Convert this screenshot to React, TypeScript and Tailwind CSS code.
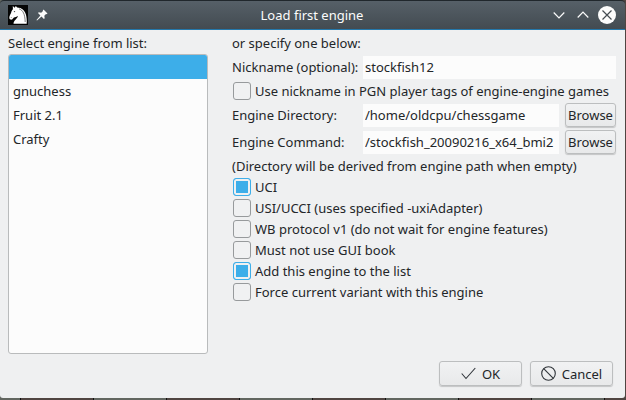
import { useLayoutEffect, useRef, useState } from "react";

const field =
  "h-[23px] min-w-0 flex-1 bg-[#fcfcfc] px-0.5 text-[13px] text-[#232629] outline-none";
const button =
  "flex items-center justify-center rounded-[3px] border border-[#bcbebf] bg-linear-to-b from-[#f1f2f3] to-[#e8e9ea] shadow-[0_1px_1px_#0000002e]";

function Check({ label, checked = false, tall = false }: { label: string; checked?: boolean; tall?: boolean }) {
  return (
    <label className={`flex items-center gap-1 pl-px whitespace-nowrap ${tall ? "h-6" : "mb-px h-5"}`}>
      <input
        type="checkbox"
        defaultChecked={checked}
        className="size-[18px] shrink-0 appearance-none rounded-[3px] border border-[#979a9c] bg-[#f0f1f2] checked:border-[#3daee9] checked:bg-[#3daee9] checked:shadow-[inset_0_0_0_2px_#eff0f1]"
      />
      {label}
    </label>
  );
}

function EngineList() {
  const engines = ["", "gnuchess", "Fruit 2.1", "Crafty"];
  const [selected, setSelected] = useState(0);
  return (
    <ul
      role="listbox"
      aria-labelledby="engine-list"
      className="flex-1 overflow-hidden rounded-[3px] border border-[#b9bbbc] bg-[#fcfcfc]"
    >
      {engines.map((name, i) => (
        <li
          key={i}
          role="option"
          aria-selected={i === selected}
          onClick={() => setSelected(i)}
          className={`flex h-6 items-center px-1 ${i === selected ? "bg-[#3daee9]" : ""}`}
        >
          {name}
        </li>
      ))}
    </ul>
  );
}

function Knight() {
  return (
    <svg viewBox="0 0 20 20" className="size-5" aria-hidden="true">
      <path fill="#050505" d="M0 0h20v20H0z" />
      <path
        fill="#fff"
        d="M4.800 1 6.700 2.700 7.800 1l1.400 1.600c4.500.1 7.500 2.800 8.700 7 .8 2.900 1 6 .8 9.200H5.500c.1-3.400 3.700-4.700 4.500-7.700-1.500.9-2.900 1-4.100 1.400l-1.800 2c-1.300.5-2.600-.3-2.800-1.600C1.200 10.900 2.700 9.500 3.200 7.600 3.500 6 4 5.200 4.900 4.200z"
      />
      <path fill="none" stroke="#444" strokeWidth=".7" d="M11 3.800c4 1.500 6 5.200 6.200 13.200" />
      <path fill="#111" d="m5.500 6.700 1.700-.7-.3 1.200zM2.600 12.400l.9-.5-.2 1z" />
    </svg>
  );
}

export default function App() {
  const command = useRef<HTMLInputElement>(null);
  useLayoutEffect(() => {
    // Keep the end of a long command visible.
    if (command.current) command.current.scrollLeft = command.current.scrollWidth;
  }, []);

  return (
    <div className="flex min-h-screen flex-col bg-[linear-gradient(90deg,#111_1px,#504541_1px,#504541_73px,#111_73px,#111_74px,#626660_74px)] bg-size-[146px_100%] bg-position-[20px_0] pr-px pb-0.5 font-['Noto_Sans',sans-serif] text-[13px] leading-5 text-[#232629]">
      <header className="grid h-[30px] grid-cols-[1fr_auto_1fr] items-center rounded-t-[4px] border-t border-b border-t-[#20272c] border-b-[#2478ab] bg-linear-to-b from-[#566068] to-[#434b51] pr-[9px] pl-2 text-[#fcfcfc]">
        <div className="flex items-center gap-2">
          <Knight />
          <button aria-label="Pin window">
            <svg viewBox="0 0 12 12" className="block size-3" aria-hidden="true">
              <path fill="#fcfcfc" d="m7.500.5 4 4-1 .7-.5-.2-1.700 1.800.4 2.400-.8.800-2.400-2.400L1 11.500.5 11l3.900-4.500L2 4.100l.8-.8 2.400.4L7 2l-.2-.5z" />
            </svg>
          </button>
        </div>
        <h1>Load first engine</h1>
        <div className="flex items-center justify-end gap-3">
          <button aria-label="Minimize">
            <svg viewBox="0 0 12 18" className="block h-[18px] w-3" fill="none" stroke="#fcfcfc" strokeWidth="1.200" aria-hidden="true">
              <path d="m.7 6.500 5.300 5.300 5.300-5.300" />
            </svg>
          </button>
          <button aria-label="Maximize">
            <svg viewBox="0 0 12 18" className="block h-[18px] w-3" fill="none" stroke="#fcfcfc" strokeWidth="1.200" aria-hidden="true">
              <path d="M.7 11.500 6 6.200l5.300 5.300" />
            </svg>
          </button>
          <button aria-label="Close" className="-ml-[3px]">
            <svg viewBox="0 0 18 18" className="block size-[18px]" aria-hidden="true">
              <circle cx="9" cy="9" r="9" fill="#fcfcfc" />
              <path d="m4.500 4.500 9 9m0-9-9 9" fill="none" stroke="#454c52" strokeWidth="1.200" />
            </svg>
          </button>
        </div>
      </header>

      <form onSubmit={(e) => e.preventDefault()} className="flex flex-1 flex-col rounded-b-[3px] bg-[#eff0f1]">
        <div className="flex flex-1 gap-6 pr-[9px] pl-2">
          <section className="flex w-[200px] flex-col">
            <h2 id="engine-list" className="flex h-6 items-center pt-0.5">Select engine from list:</h2>
            <EngineList />
          </section>

          <section className="min-w-0 flex-1">
            <p className="flex h-[25px] items-center pt-px">or specify one below:</p>
            <div className="flex h-6 items-center">
              <label htmlFor="nickname" className="w-[131px] whitespace-nowrap">Nickname (optional):</label>
              <input id="nickname" defaultValue="stockfish12" className={field} />
            </div>
            <Check tall label="Use nickname in PGN player tags of engine-engine games" />
            <div className="mb-[3px] flex h-6 items-center">
              <label htmlFor="directory" className="w-[131px]">Engine Directory:</label>
              <input id="directory" defaultValue="/home/oldcpu/chessgame" className={field} />
              <button type="button" className={`${button} ml-1.5 h-6 w-[51px]`}>Browse</button>
            </div>
            <div className="flex h-6 items-center">
              <label htmlFor="command" className="w-[131px]">Engine Command:</label>
              <input id="command" ref={command} defaultValue="/stockfish_20090216_x64_bmi2" className={field} />
              <button type="button" className={`${button} ml-1.5 h-6 w-[51px]`}>Browse</button>
            </div>
            <p className="flex h-[23px] items-center whitespace-nowrap">(Directory will be derived from engine path when empty)</p>
            <Check label="UCI" checked />
            <Check label="USI/UCCI (uses specified -uxiAdapter)" />
            <Check label="WB protocol v1 (do not wait for engine features)" />
            <Check label="Must not use GUI book" />
            <Check label="Add this engine to the list" checked />
            <Check label="Force current variant with this engine" />
          </section>
        </div>

        <footer className="flex justify-end gap-2 pt-[7px] pr-3 pb-3">
          <button type="submit" className={`${button} h-[25px] w-[83px] gap-1.5`}>
            <svg viewBox="0 0 15 13" className="h-[13px] w-[15px]" fill="none" stroke="#30353a" strokeWidth="1.100" aria-hidden="true">
              <path d="m.7 6.500 4.300 5L14.300 1" />
            </svg>
            OK
          </button>
          <button type="button" className={`${button} h-[25px] w-[83px] gap-1.5`}>
            <svg viewBox="0 0 15 15" className="size-[15px]" fill="none" stroke="#30353a" strokeWidth="1.100" aria-hidden="true">
              <circle cx="7.500" cy="7.500" r="6.800" />
              <path d="m2.700 2.700 9.600 9.600" />
            </svg>
            Cancel
          </button>
        </footer>
      </form>
    </div>
  );
}
